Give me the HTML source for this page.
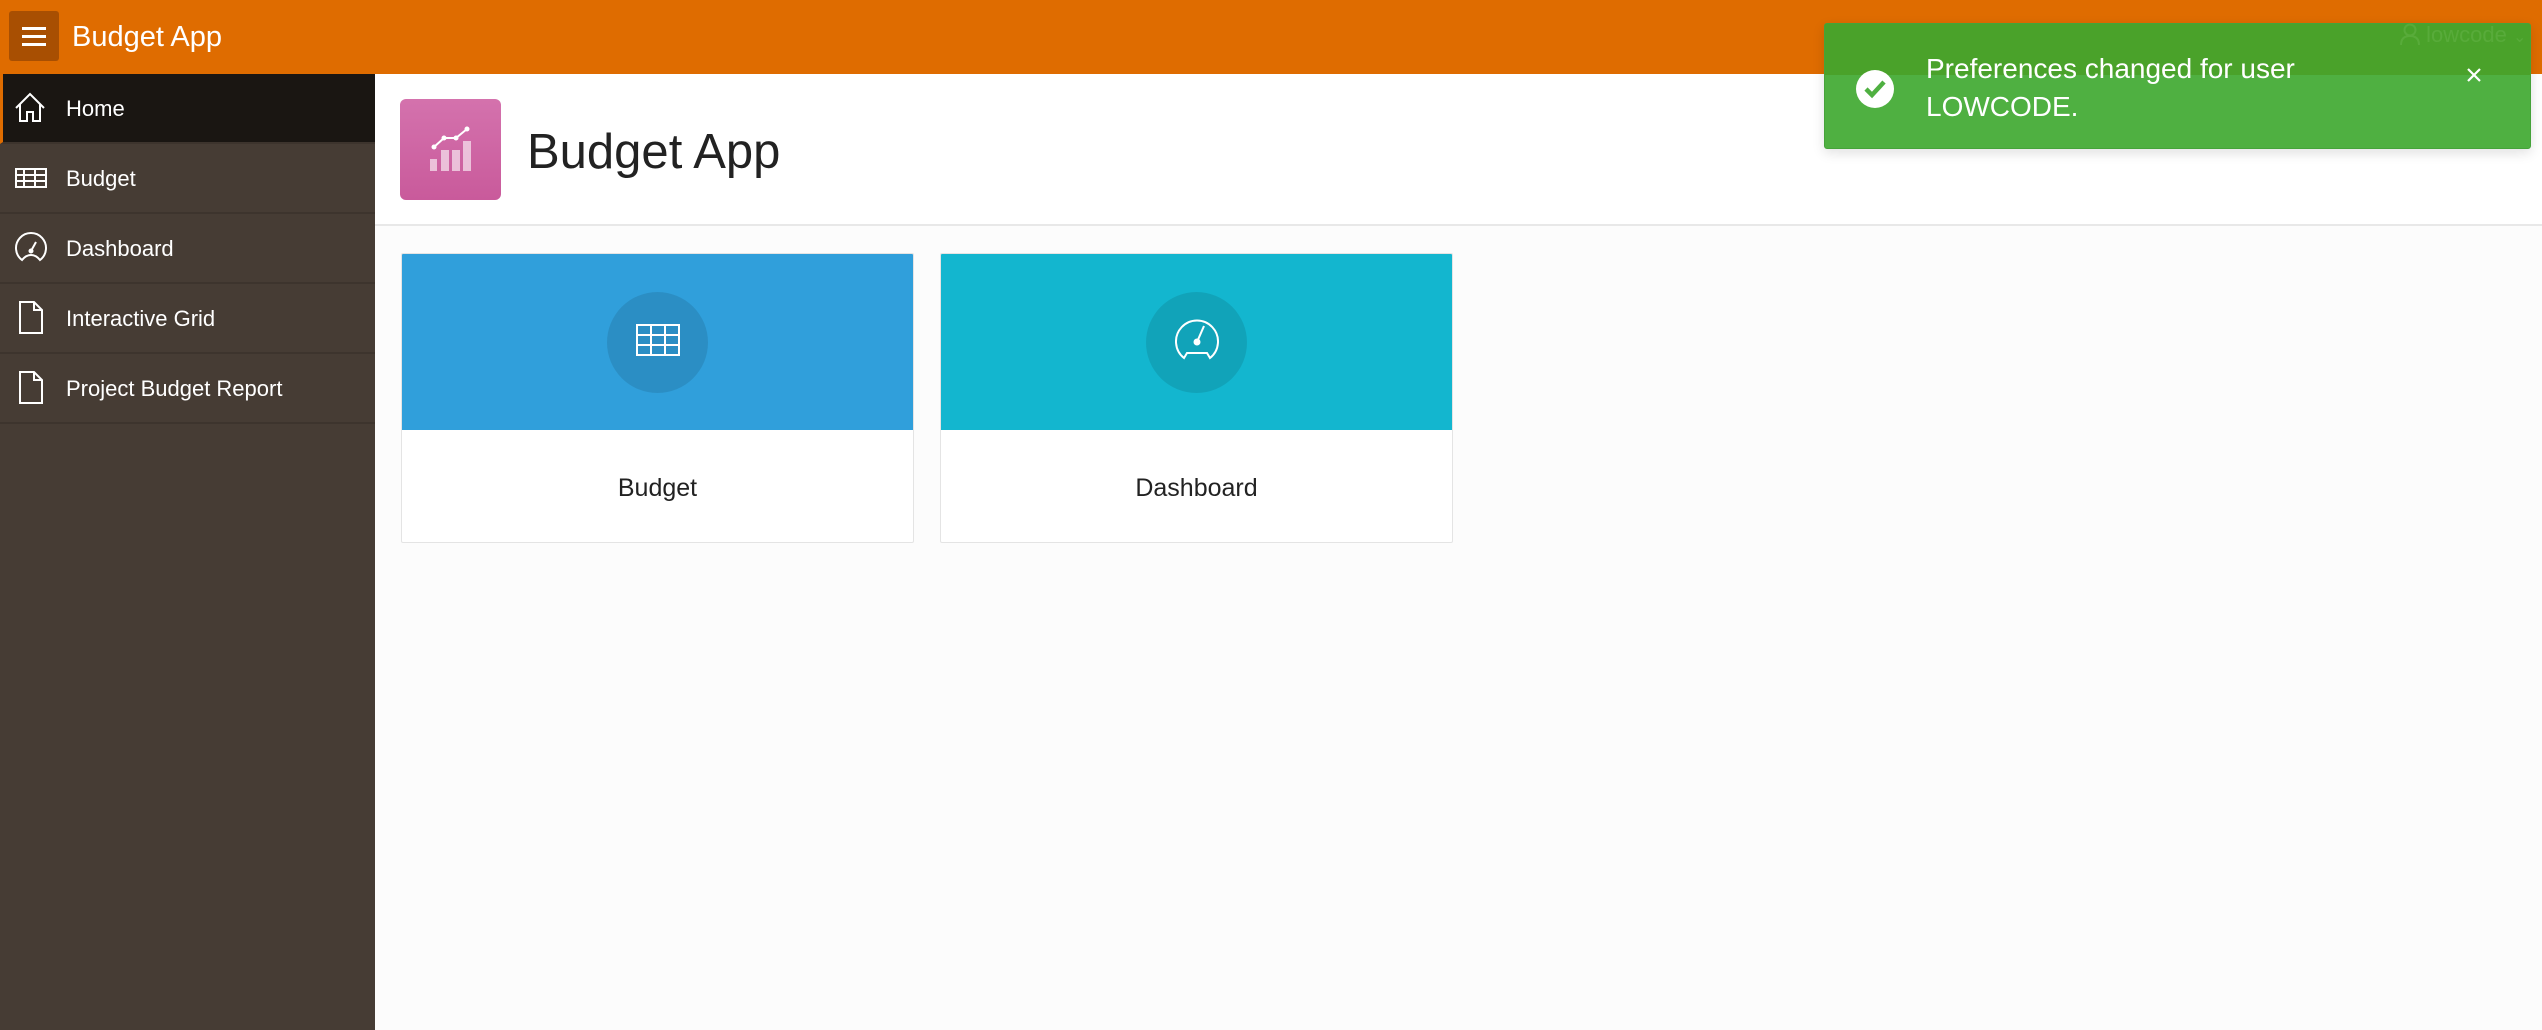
<!DOCTYPE html>
<html><head><meta charset="utf-8"><style>
*{box-sizing:border-box;margin:0;padding:0}
body{width:2542px;height:1030px;overflow:hidden;background:#fcfcfc;font-family:"Liberation Sans",sans-serif;position:relative}
.hdr{position:absolute;left:0;top:0;width:2542px;height:74px;background:#df6c00}
.burger{position:absolute;left:9px;top:11px;width:50px;height:50px;background:#a84f02;border-radius:3px}
.burger i{position:absolute;left:13px;width:24px;height:3px;background:#fff}
.apptitle{position:absolute;left:72px;top:21px;color:#fff;font-size:29px}
.side{position:absolute;left:0;top:74px;width:375px;height:956px;background:#463c34}
.item{position:absolute;left:0;width:375px;height:70px;border-bottom:2px solid #3d342d;color:#fff;font-size:22px}
.item span{position:absolute;left:66px;top:22px}
.item svg{position:absolute;left:14px;top:17px}
.active{background:#1a1612;border-left:3px solid #df6c00}
.active span{left:63px}
.active svg{left:11px}
.top{position:absolute;left:375px;top:74px;width:2167px;height:152px;background:#fff;border-bottom:2px solid #e8e8e8}
.pic{position:absolute;left:400px;top:99px;width:101px;height:101px;border-radius:6px;background:linear-gradient(#d472ad,#c95a9b)}
.ptitle{position:absolute;left:527px;top:124px;font-size:49px;color:#222}
.card{position:absolute;top:253px;width:513px;height:290px;background:#fff;border:1px solid #e4e4e4;border-radius:2px;overflow:hidden}
.card .band{height:176px;position:relative}
.card .circ{position:absolute;left:205px;top:38px;width:101px;height:101px;border-radius:50%;background:rgba(0,0,0,0.1)}
.card .lab{position:absolute;left:0;width:100%;top:220px;text-align:center;font-size:25px;color:#222}
.toast{position:absolute;left:1824px;top:23px;width:707px;height:126px;border-radius:3px;background:linear-gradient(#4aa22a 0,#4aa22a 51px,#4fb041 51px);border:1px solid #45a33a;box-shadow:0 4px 12px rgba(0,0,0,0.12)}
.ttext{position:absolute;left:101px;top:26px;color:#fff;font-size:28px;line-height:38px}
.user{position:absolute;left:2400px;top:22px;color:#58ab3a;font-size:22px;z-index:5}
</style></head><body>
<div class="hdr">
 <div class="burger"><i style="top:16px"></i><i style="top:24px"></i><i style="top:32px"></i></div>
 <div class="apptitle">Budget App</div>
</div>
<div class="side">
 <div class="item active" style="top:0"><svg width="34" height="34" viewBox="0 0 34 34" fill="none" stroke="#fff" stroke-width="2"><path d="M2 17 L16 3 L30 17 M6 13 V30 H13 V21 H19 V30 H26 V13"/></svg><span>Home</span></div>
 <div class="item" style="top:70px"><svg width="34" height="34" viewBox="0 0 34 34" fill="none" stroke="#fff" stroke-width="2"><rect x="2" y="8" width="30" height="18"/><path d="M2 14H32M2 20H32M10 8V26M21 8V26"/></svg><span>Budget</span></div>
 <div class="item" style="top:140px"><svg width="34" height="34" viewBox="0 0 34 34" fill="none" stroke="#fff" stroke-width="2"><path d="M8 29 A15 15 0 1 1 26 29 Q22 24 17 24 Q12 24 8 29Z"/><path d="M17 20 L22 11"/><circle cx="17" cy="20" r="1.5" fill="#fff"/></svg><span>Dashboard</span></div>
 <div class="item" style="top:210px"><svg width="34" height="34" viewBox="0 0 34 34" fill="none" stroke="#fff" stroke-width="2"><path d="M6 1 H20 L28 9 V32 H6 Z M20 1 V9 H28"/></svg><span>Interactive Grid</span></div>
 <div class="item" style="top:280px"><svg width="34" height="34" viewBox="0 0 34 34" fill="none" stroke="#fff" stroke-width="2"><path d="M6 1 H20 L28 9 V32 H6 Z M20 1 V9 H28"/></svg><span>Project Budget Report</span></div>
</div>
<div class="top"></div>
<div class="pic"><svg width="101" height="101" viewBox="0 0 101 101"><g fill="rgba(255,255,255,0.6)"><rect x="30" y="60" width="7" height="12"/><rect x="41" y="51" width="8" height="21"/><rect x="52" y="51" width="8" height="21"/><rect x="63" y="42" width="8" height="30"/></g><polyline points="34,48 44,39 56,39 67,30" fill="none" stroke="#fff" stroke-width="2"/><g fill="#fff"><circle cx="34" cy="48" r="2.5"/><circle cx="44" cy="39" r="2.5"/><circle cx="56" cy="39" r="2.5"/><circle cx="67" cy="30" r="2.5"/></g></svg></div>
<div class="ptitle">Budget App</div>
<div class="card" style="left:401px"><div class="band" style="background:#309fdb"><div class="circ"></div><svg style="position:absolute;left:234px;top:70px" width="44" height="32" viewBox="0 0 44 32" fill="none" stroke="#fff" stroke-width="2"><rect x="1" y="1" width="42" height="30"/><path d="M1 11H43M1 21H43M15 1V31M29 1V31"/></svg></div><div class="lab">Budget</div></div>
<div class="card" style="left:940px"><div class="band" style="background:#13b6cf"><div class="circ"></div><svg style="position:absolute;left:234px;top:62px" width="44" height="46" viewBox="0 0 44 46" fill="none" stroke="#fff" stroke-width="2"><path d="M9 42 A21 21 0 1 1 35 42 L32 37 H12 Z"/><path d="M22 26 L29 10"/><circle cx="22" cy="26" r="2.5" fill="#fff"/></svg></div><div class="lab">Dashboard</div></div>
<div class="toast">
 <svg style="position:absolute;left:30px;top:45px" width="40" height="40" viewBox="0 0 40 40"><circle cx="20" cy="20" r="19" fill="#fff"/><path d="M11 20 L17 26 L29 13" fill="none" stroke="#4fb041" stroke-width="4.5"/></svg>
 <div class="ttext">Preferences changed for user<br>LOWCODE.</div>
 <svg style="position:absolute;left:642px;top:44px" width="14" height="14" viewBox="0 0 14 14" stroke="#fff" stroke-width="2.2"><path d="M1 1L13 13M13 1L1 13"/></svg>
</div>
<div class="user"><svg width="20" height="22" viewBox="0 0 20 22" fill="none" stroke="#58ab3a" stroke-width="2" style="vertical-align:-3px"><circle cx="10" cy="7" r="5.5"/><path d="M1 22 Q1 13 10 13 Q19 13 19 22"/></svg> lowcode <span style="font-size:16px">&#8964;</span></div>
</body></html>
